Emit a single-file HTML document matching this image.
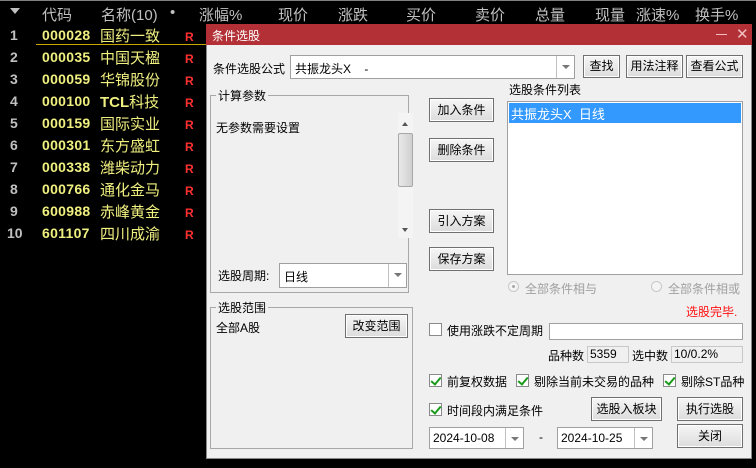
<!DOCTYPE html>
<html><head><meta charset="utf-8"><style>
*{margin:0;padding:0;box-sizing:border-box}
body{width:756px;height:468px;background:#000;position:relative;overflow:hidden;font-family:"Liberation Sans","Noto Sans CJK SC",sans-serif}
.a{position:absolute;white-space:nowrap}
.h{color:#c0c0c0;font-size:15px;top:4px}
.n{color:#c0c0c0;font-size:14px;font-weight:bold;left:10px}
.c{color:#f0f080;font-size:14px;font-weight:bold;left:42px;letter-spacing:0.3px}
.m{color:#f0f080;font-size:15px;left:100px}
.r{color:#ff3030;font-size:12px;font-weight:bold;left:185px}
.t{font-size:12px;color:#000}
.btn{position:absolute;background:linear-gradient(#f6f6f6,#dcdcdc);border:1px solid #707070;box-shadow:inset 0 0 0 1px #fff;font-size:12px;text-align:center;color:#000}
.box{position:absolute;background:#fff;border:1px solid #a0a0a0}
.grp{position:absolute;border:1px solid #a8a8a8}
.gl{position:absolute;background:#f0f0f0;font-size:12px;padding:0 2px;top:-9px;left:5px}
.dd{position:absolute;right:0;top:0;bottom:0;width:18px;border-left:1px solid #c0c0c0}
.dd:after{content:"";position:absolute;left:5px;top:9px;border:4px solid transparent;border-top:4px solid #777}
.cb{position:absolute;width:13px;height:13px;border:1px solid #8a8a8a;background:#fff}
.ck:after{content:"";position:absolute;left:3px;top:0px;width:4px;height:8px;border:solid #1a9a1a;border-width:0 2px 2px 0;transform:rotate(40deg)}
</style></head><body>
<div class="a" style="left:0;top:0;width:756px;height:1px;background:#808080"></div>
<div class="a" style="left:10px;top:8px;border:5px solid transparent;border-top:6px solid #c0c0c0"></div>
<div class="a h" style="left:42px">代码</div>
<div class="a h" style="left:101px">名称(10)</div>
<div class="a h" style="left:170px">•</div>
<div class="a h" style="left:199px">涨幅%</div>
<div class="a h" style="left:278px">现价</div>
<div class="a h" style="left:338px">涨跌</div>
<div class="a h" style="left:406px">买价</div>
<div class="a h" style="left:475px">卖价</div>
<div class="a h" style="left:535px">总量</div>
<div class="a h" style="left:595px">现量</div>
<div class="a h" style="left:636px">涨速%</div>
<div class="a h" style="left:695px">换手%</div>
<div class="a" style="left:36px;top:44px;width:170px;height:1px;background:#c8a800"></div>

<div class="a n" style="top:27px">1</div><div class="a c" style="top:27px">000028</div><div class="a m" style="top:25px">国药一致</div><div class="a r" style="top:30px">R</div>
<div class="a n" style="top:49px">2</div><div class="a c" style="top:49px">000035</div><div class="a m" style="top:47px">中国天楹</div><div class="a r" style="top:52px">R</div>
<div class="a n" style="top:71px">3</div><div class="a c" style="top:71px">000059</div><div class="a m" style="top:69px">华锦股份</div><div class="a r" style="top:74px">R</div>
<div class="a n" style="top:93px">4</div><div class="a c" style="top:93px">000100</div><div class="a m" style="top:91px;font-weight:bold">TCL<span style="font-weight:normal">科技</span></div><div class="a r" style="top:96px">R</div>
<div class="a n" style="top:115px">5</div><div class="a c" style="top:115px">000159</div><div class="a m" style="top:113px">国际实业</div><div class="a r" style="top:118px">R</div>
<div class="a n" style="top:137px">6</div><div class="a c" style="top:137px">000301</div><div class="a m" style="top:135px">东方盛虹</div><div class="a r" style="top:140px">R</div>
<div class="a n" style="top:159px">7</div><div class="a c" style="top:159px">000338</div><div class="a m" style="top:157px">潍柴动力</div><div class="a r" style="top:162px">R</div>
<div class="a n" style="top:181px">8</div><div class="a c" style="top:181px">000766</div><div class="a m" style="top:179px">通化金马</div><div class="a r" style="top:184px">R</div>
<div class="a n" style="top:203px">9</div><div class="a c" style="top:203px">600988</div><div class="a m" style="top:201px">赤峰黄金</div><div class="a r" style="top:206px">R</div>
<div class="a n" style="top:225px;left:7px">10</div><div class="a c" style="top:225px">601107</div><div class="a m" style="top:223px">四川成渝</div><div class="a r" style="top:228px">R</div>

<div class="a" style="left:206px;top:24px;width:546px;height:435px;background:#f0f0f0;border:1px solid #888"></div>
<div class="a" style="left:206px;top:24px;width:546px;height:21px;background:#b23036"></div>
<div class="a" style="left:212px;top:27px;color:#fff;font-size:12px">条件选股</div>
<div class="a" style="left:716px;top:34px;width:11px;height:1px;background:#f0c0c0"></div>
<div class="a" style="left:736px;top:25px;color:#f0c0c0;font-size:15px">✕</div>

<div class="a t" style="left:213px;top:60px">条件选股公式</div>
<div class="box" style="left:290px;top:55px;width:285px;height:24px"><span class="a t" style="left:4px;top:4px">共振龙头X &nbsp;&nbsp;&nbsp;-</span><div class="dd"></div></div>
<div class="btn" style="left:583px;top:55px;width:37px;height:23px;line-height:21px">查找</div>
<div class="btn" style="left:626px;top:55px;width:57px;height:23px;line-height:21px">用法注释</div>
<div class="btn" style="left:686px;top:55px;width:57px;height:23px;line-height:21px">查看公式</div>

<div class="grp" style="left:210px;top:95px;width:199px;height:198px"><div class="gl">计算参数</div></div>
<div class="a t" style="left:216px;top:119px">无参数需要设置</div>
<div class="a" style="left:398px;top:113px;width:15px;height:125px;background:#f4f4f4"></div>
<div class="a" style="left:402px;top:119px;border:3px solid transparent;border-bottom:4px solid #555"></div>
<div class="a" style="left:402px;top:228px;border:3px solid transparent;border-top:4px solid #555"></div>
<div class="a" style="left:398px;top:133px;width:15px;height:54px;background:linear-gradient(90deg,#e8e8e8,#d0d0d0);border:1px solid #a8a8a8;border-radius:2px"></div>
<div class="a t" style="left:218px;top:267px">选股周期:</div>
<div class="box" style="left:279px;top:263px;width:128px;height:25px"><span class="a t" style="left:4px;top:4px">日线</span><div class="dd"></div></div>

<div class="btn" style="left:429px;top:98px;width:65px;height:24px;line-height:22px">加入条件</div>
<div class="btn" style="left:429px;top:138px;width:65px;height:24px;line-height:22px">删除条件</div>
<div class="btn" style="left:429px;top:209px;width:65px;height:24px;line-height:22px">引入方案</div>
<div class="btn" style="left:429px;top:247px;width:65px;height:24px;line-height:22px">保存方案</div>

<div class="a t" style="left:509px;top:81px">选股条件列表</div>
<div class="box" style="left:507px;top:101px;width:236px;height:174px"><div class="a" style="left:1px;top:1px;width:232px;height:20px;background:#3399ff;color:#fff;font-size:13px;padding:1px 2px">共振龙头X &nbsp;日线</div></div>
<div class="a" style="left:508px;top:281px;width:11px;height:11px;border-radius:50%;border:1px solid #c8c8c8;background:#f4f4f4"></div>
<div class="a" style="left:512px;top:285px;width:3px;height:3px;border-radius:50%;background:#aaa"></div>
<div class="a t" style="left:525px;top:280px;color:#a0a0a0">全部条件相与</div>
<div class="a" style="left:651px;top:281px;width:11px;height:11px;border-radius:50%;border:1px solid #c8c8c8;background:#f4f4f4"></div>
<div class="a t" style="left:668px;top:280px;color:#a0a0a0">全部条件相或</div>

<div class="a t" style="left:686px;top:303px;color:#ff1010">选股完毕.</div>

<div class="grp" style="left:210px;top:307px;width:203px;height:142px"><div class="gl">选股范围</div></div>
<div class="a t" style="left:216px;top:319px">全部A股</div>
<div class="btn" style="left:345px;top:314px;width:63px;height:24px;line-height:22px">改变范围</div>

<div class="cb" style="left:429px;top:323px"></div>
<div class="a t" style="left:447px;top:322px">使用涨跌不定周期</div>
<div class="box" style="left:549px;top:323px;width:194px;height:17px"></div>
<div class="a t" style="left:548px;top:347px">品种数</div>
<div class="a" style="left:587px;top:346px;width:42px;height:17px;border:1px solid #c8c8c8;font-size:12px;padding-left:2px">5359</div>
<div class="a t" style="left:632px;top:347px">选中数</div>
<div class="a" style="left:671px;top:346px;width:72px;height:17px;border:1px solid #c8c8c8;font-size:12px;padding-left:2px">10/0.2%</div>

<div class="cb ck" style="left:429px;top:374px"></div><div class="a t" style="left:447px;top:373px">前复权数据</div>
<div class="cb ck" style="left:516px;top:374px"></div><div class="a t" style="left:534px;top:373px">剔除当前未交易的品种</div>
<div class="cb ck" style="left:663px;top:374px"></div><div class="a t" style="left:681px;top:373px">剔除ST品种</div>
<div class="cb ck" style="left:429px;top:403px"></div><div class="a t" style="left:447px;top:402px">时间段内满足条件</div>
<div class="btn" style="left:591px;top:397px;width:71px;height:24px;line-height:22px">选股入板块</div>
<div class="btn" style="left:677px;top:397px;width:66px;height:24px;line-height:22px">执行选股</div>
<div class="btn" style="left:677px;top:424px;width:66px;height:24px;line-height:22px">关闭</div>
<div class="box" style="left:429px;top:427px;width:95px;height:22px"><span class="a t" style="left:3px;top:3px">2024-10-08</span><div class="dd"></div></div>
<div class="a t" style="left:539px;top:430px">-</div>
<div class="box" style="left:557px;top:427px;width:96px;height:22px"><span class="a t" style="left:3px;top:3px">2024-10-25</span><div class="dd"></div></div>
</body></html>
